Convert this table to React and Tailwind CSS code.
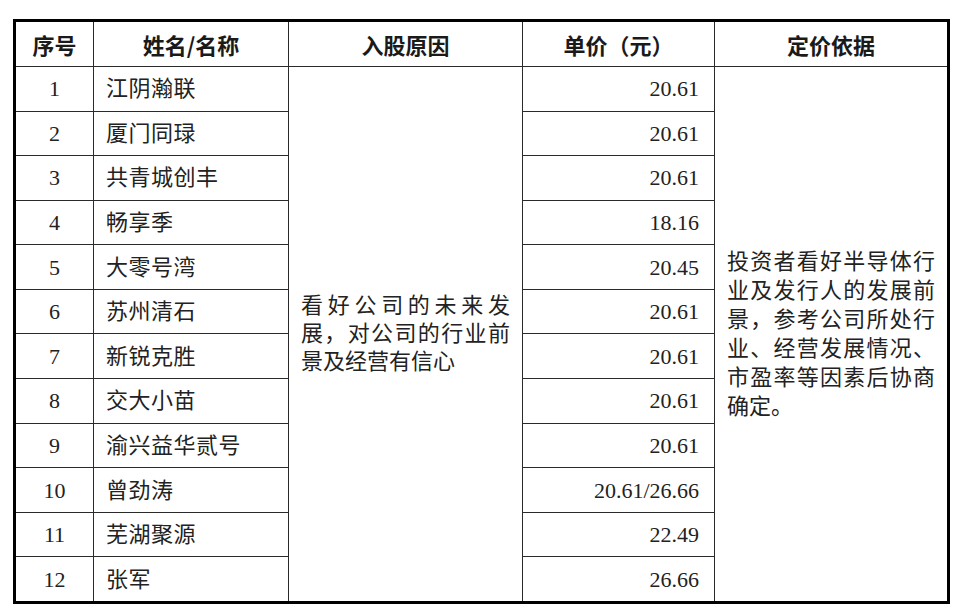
const ROWS = [
  { no: '1', name: '江阴瀚联', price: '20.61' },
  { no: '2', name: '厦门同琭', price: '20.61' },
  { no: '3', name: '共青城创丰', price: '20.61' },
  { no: '4', name: '畅享季', price: '18.16' },
  { no: '5', name: '大零号湾', price: '20.45' },
  { no: '6', name: '苏州清石', price: '20.61' },
  { no: '7', name: '新锐克胜', price: '20.61' },
  { no: '8', name: '交大小苗', price: '20.61' },
  { no: '9', name: '渝兴益华贰号', price: '20.61' },
  { no: '10', name: '曾劲涛', price: '20.61/26.66' },
  { no: '11', name: '芜湖聚源', price: '22.49' },
  { no: '12', name: '张军', price: '26.66' },
]

const HEADERS = ['序号', '姓名/名称', '入股原因', '单价（元）', '定价依据']

const REASON = ['看好公司的未来发', '展，对公司的行业前', '景及经营有信心']
const BASIS = [
  '投资者看好半导体行',
  '业及发行人的发展前',
  '景，参考公司所处行',
  '业、经营发展情况、',
  '市盈率等因素后协商',
  '确定。',
]

const serif = "font-['Liberation_Serif','Noto_Sans_CJK_SC',serif]"

function JustifiedLines({ lines, lineHeight }) {
  return (
    <div className="w-full">
      {lines.map((line, i) => (
        <div
          key={i}
          className={i < lines.length - 1 ? '[text-align-last:justify] text-justify' : 'text-left'}
          style={{ lineHeight }}
        >
          {line}
        </div>
      ))}
    </div>
  )
}

export default function App() {
  return (
    <div className="w-[960px] h-[612px] bg-white pl-[13px] pt-[19px]">
      <div
        className={`grid grid-cols-[77px_194px_233px_191px_232px] grid-rows-[44px_repeat(12,1fr)] gap-px bg-[#2a2a2a] border-[3px] border-black w-[937px] h-[585px] text-[#222] ${serif}`}
      >
        {/* header */}
        {HEADERS.map(h => (
          <div
            key={h}
            className="bg-white flex items-center justify-center text-[22px] font-bold font-['Noto_Sans_CJK_SC',sans-serif] text-[#1a1a1a]"
          >
            {h}
          </div>
        ))}

        {/* body */}
        {ROWS.map((r, i) => [
          <div key={`no${i}`} className="bg-white flex items-center justify-center text-[22px]">
            {r.no}
          </div>,
          <div key={`nm${i}`} className="bg-white flex items-center pl-[12px] text-[22px] tracking-[0.5px]">
            {r.name}
          </div>,
          i === 0 && (
            <div key="reason" className="row-span-12 bg-white flex items-center px-[12px] text-[22px]">
              <JustifiedLines lines={REASON} lineHeight="28px" />
            </div>
          ),
          <div key={`pr${i}`} className="bg-white flex items-center justify-end pr-[15px] text-[22px]">
            {r.price}
          </div>,
          i === 0 && (
            <div key="basis" className="row-span-12 bg-white flex items-center px-[12px] text-[22px]">
              <JustifiedLines lines={BASIS} lineHeight="29px" />
            </div>
          ),
        ])}
      </div>
    </div>
  )
}
